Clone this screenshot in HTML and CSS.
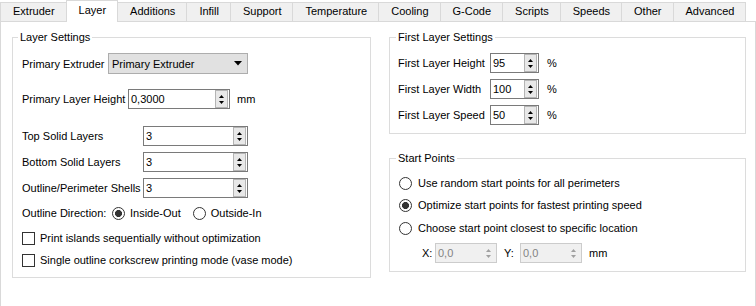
FILE: index.html
```html
<!DOCTYPE html>
<html>
<head>
<meta charset="utf-8">
<link rel="stylesheet" href="styles.css">
</head>
<body>
<div class="tabbar">
  <div class="tab">Extruder</div>
  <div class="tab active">Layer</div>
  <div class="tab">Additions</div>
  <div class="tab">Infill</div>
  <div class="tab">Support</div>
  <div class="tab">Temperature</div>
  <div class="tab">Cooling</div>
  <div class="tab">G-Code</div>
  <div class="tab">Scripts</div>
  <div class="tab">Speeds</div>
  <div class="tab">Other</div>
  <div class="tab">Advanced</div>
</div>
<div class="pane">
  <fieldset class="group layer">
    <legend>Layer Settings</legend>
    <div class="body">
      <div class="row mt9 h21">
        <span class="lbl w-ext">Primary Extruder</span>
        <div class="combo"><span>Primary Extruder</span>
          <svg class="caret" width="8" height="5" viewBox="0 0 8 5"><polygon points="0,0 8,0 4,4.5" fill="#000"/></svg>
        </div>
      </div>
      <div class="row mt15">
        <span class="lbl w-plh">Primary Layer Height</span>
        <div class="spin w-plh-box"><span class="val">0,3000</span>
          <span class="btns"><svg width="11" height="16" viewBox="0 0 11 16"><polygon points="3,7 8,7 5.5,4" /><polygon points="3,10 8,10 5.5,13" /></svg></span>
        </div>
        <span class="unit">mm</span>
      </div>
      <div class="row mt17">
        <span class="lbl w-solid">Top Solid Layers</span>
        <div class="spin w-solid-box"><span class="val">3</span>
          <span class="btns"><svg width="11" height="16" viewBox="0 0 11 16"><polygon points="3,7 8,7 5.5,4" /><polygon points="3,10 8,10 5.5,13" /></svg></span>
        </div>
      </div>
      <div class="row mt6">
        <span class="lbl w-solid">Bottom Solid Layers</span>
        <div class="spin w-solid-box"><span class="val">3</span>
          <span class="btns"><svg width="11" height="16" viewBox="0 0 11 16"><polygon points="3,7 8,7 5.5,4" /><polygon points="3,10 8,10 5.5,13" /></svg></span>
        </div>
      </div>
      <div class="row mt6">
        <span class="lbl w-solid">Outline/Perimeter Shells</span>
        <div class="spin w-solid-box"><span class="val">3</span>
          <span class="btns"><svg width="11" height="16" viewBox="0 0 11 16"><polygon points="3,7 8,7 5.5,4" /><polygon points="3,10 8,10 5.5,13" /></svg></span>
        </div>
      </div>
      <div class="row mt5">
        <span class="lbl w-dir">Outline Direction:</span>
        <span class="radio on"></span><span class="opt">Inside-Out</span>
        <span class="radio gap-l"></span><span class="opt">Outside-In</span>
      </div>
      <div class="row mt5">
        <span class="check"></span><span class="opt">Print islands sequentially without optimization</span>
      </div>
      <div class="row mt2">
        <span class="check"></span><span class="opt">Single outline corkscrew printing mode (vase mode)</span>
      </div>
    </div>
  </fieldset>
  <div class="col">
    <fieldset class="group first">
      <legend>First Layer Settings</legend>
      <div class="body">
        <div class="row mt9">
          <span class="lbl w-first">First Layer Height</span>
          <div class="spin w-first-box"><span class="val">95</span>
            <span class="btns"><svg width="11" height="16" viewBox="0 0 11 16"><polygon points="3,7 8,7 5.5,4" /><polygon points="3,10 8,10 5.5,13" /></svg></span>
          </div>
          <span class="unit pct">%</span>
        </div>
        <div class="row mt6">
          <span class="lbl w-first">First Layer Width</span>
          <div class="spin w-first-box"><span class="val">100</span>
            <span class="btns"><svg width="11" height="16" viewBox="0 0 11 16"><polygon points="3,7 8,7 5.5,4" /><polygon points="3,10 8,10 5.5,13" /></svg></span>
          </div>
          <span class="unit pct">%</span>
        </div>
        <div class="row mt6">
          <span class="lbl w-first">First Layer Speed</span>
          <div class="spin w-first-box"><span class="val">50</span>
            <span class="btns"><svg width="11" height="16" viewBox="0 0 11 16"><polygon points="3,7 8,7 5.5,4" /><polygon points="3,10 8,10 5.5,13" /></svg></span>
          </div>
          <span class="unit pct">%</span>
        </div>
      </div>
    </fieldset>
    <fieldset class="group start">
      <legend>Start Points</legend>
      <div class="body">
        <div class="row mt8">
          <span class="radio"></span><span class="opt wide">Use random start points for all perimeters</span>
        </div>
        <div class="row mt2">
          <span class="radio on"></span><span class="opt wide">Optimize start points for fastest printing speed</span>
        </div>
        <div class="row mt3">
          <span class="radio"></span><span class="opt wide">Choose start point closest to specific location</span>
        </div>
        <div class="row mt5 xy">
          <span class="axis x">X:</span>
          <div class="spin disabled w-xy"><span class="val">0,0</span>
            <span class="btns"><svg width="11" height="16" viewBox="0 0 11 16"><polygon points="3,7 8,7 5.5,4" /><polygon points="3,10 8,10 5.5,13" /></svg></span>
          </div>
          <span class="axis y">Y:</span>
          <div class="spin disabled w-xy"><span class="val">0,0</span>
            <span class="btns"><svg width="11" height="16" viewBox="0 0 11 16"><polygon points="3,7 8,7 5.5,4" /><polygon points="3,10 8,10 5.5,13" /></svg></span>
          </div>
          <span class="unit">mm</span>
        </div>
      </div>
    </fieldset>
  </div>
</div>
</body>
</html>
```

FILE: styles.css
```css
html, body {
  margin: 0;
  background: #ffffff;
}
body {
  font-family: "Liberation Sans", Arial, sans-serif;
  font-size: 11px;
  color: #000000;
  width: 756px;
  height: 306px;
  overflow: hidden;
}

/* ---- tab bar ---- */
.tabbar {
  display: flex;
  align-items: flex-end;
  height: 22px;
  box-sizing: border-box;
  border-bottom: 1px solid #d9d9d9;
}
.tab {
  height: 19px;
  box-sizing: border-box;
  padding: 0 11px 0 12px;
  border: 1px solid #d9d9d9;
  border-bottom: none;
  background: #f0f0f0;
  line-height: 17px;
  margin-left: -1px;
  white-space: nowrap;
}
.tab:first-child {
  margin-left: 0;
}
.tab.active {
  height: 22px;
  margin-bottom: -1px;
  background: #ffffff;
  line-height: 19px;
}

/* ---- pane ---- */
.pane {
  display: flex;
  align-items: flex-start;
  gap: 18px;
  height: 284px;
  box-sizing: border-box;
  padding: 8px 9px 0 11px;
  border-left: 1px solid #d9d9d9;
  border-right: 1px solid #d9d9d9;
}
.col {
  display: flex;
  flex-direction: column;
  gap: 17px;
  width: 357px;
}

.group {
  margin: 0;
  padding: 0;
  min-width: 0;
  border: 1px solid #dcdcdc;
  box-sizing: border-box;
}
.group legend {
  padding: 0 2px;
  line-height: 14px;
  margin-left: 5px;
}
.group.layer {
  width: 359px;
}
.group.first,
.group.start {
  width: 357px;
}
.group.first legend,
.group.start legend {
  margin-left: 6px;
}
.group .body {
  display: flex;
  flex-direction: column;
}
.group.layer .body {
  padding: 0 9px 7px 9px;
}
.group.first .body {
  padding: 0 8px 8px 8px;
}
.group.start .body {
  padding: 0 9px 8px 9px;
}

/* ---- rows ---- */
.row {
  display: flex;
  align-items: center;
  height: 20px;
  white-space: nowrap;
}
.row.h21 { height: 21px; }
.mt2 { margin-top: 2px; }
.mt3 { margin-top: 3px; }
.mt5 { margin-top: 5px; }
.mt6 { margin-top: 6px; }
.mt8 { margin-top: 8px; }
.mt9 { margin-top: 9px; }
.mt15 { margin-top: 15px; }
.mt17 { margin-top: 17px; }

.lbl { flex: none; }
.w-ext { width: 86px; }
.w-plh { width: 106px; }
.w-solid { width: 121px; }
.w-dir { width: 90px; }
.w-first { width: 92px; }

/* ---- combo ---- */
.combo {
  display: flex;
  align-items: center;
  justify-content: space-between;
  width: 140px;
  height: 21px;
  box-sizing: border-box;
  border: 1px solid #adadad;
  background: #e1e1e1;
  padding: 0 5px 0 3px;
}
.caret { display: block; }

/* ---- spin box ---- */
.spin {
  display: flex;
  align-items: center;
  height: 20px;
  box-sizing: border-box;
  border: 1px solid #7a7a7a;
  background: #ffffff;
  padding: 0 1px 0 2px;
  flex: none;
}
.spin .val { flex: 1; }
.spin .btns {
  display: flex;
  align-items: center;
  justify-content: center;
  width: 13px;
  height: 18px;
  box-sizing: border-box;
  border: 1px solid #b4b4b4;
  background: #e8e8e8;
}
.spin .btns svg { display: block; fill: #000; }
.w-plh-box { width: 102px; }
.w-solid-box { width: 105px; }
.w-first-box { width: 49px; }
.w-xy { width: 62px; }

.spin.disabled {
  border-color: #cccccc;
  background: #f0f0f0;
  color: #838383;
}
.spin.disabled .btns {
  border-color: #f0f0f0;
  background: #f0f0f0;
}
.spin.disabled .btns svg { fill: #a0a0a0; }

.unit { margin-left: 7px; }
.unit.pct { margin-left: 8px; }

/* ---- radios / checks ---- */
.radio {
  flex: none;
  width: 13px;
  height: 13px;
  box-sizing: border-box;
  border: 1px solid #333333;
  border-radius: 50%;
  background: #ffffff;
}
.radio.on {
  background: radial-gradient(circle, #333333 0 3.2px, #ffffff 3.8px);
}
.radio.gap-l { margin-left: 12px; }
.check {
  flex: none;
  width: 13px;
  height: 13px;
  box-sizing: border-box;
  border: 1px solid #333333;
  background: #ffffff;
}
.opt { margin-left: 5px; }
.opt.wide { margin-left: 6px; }

.xy { padding-left: 23px; }
.axis { flex: none; }
.axis.x { width: 13px; }
.axis.y { width: 16px; margin-left: 7px; }
```
